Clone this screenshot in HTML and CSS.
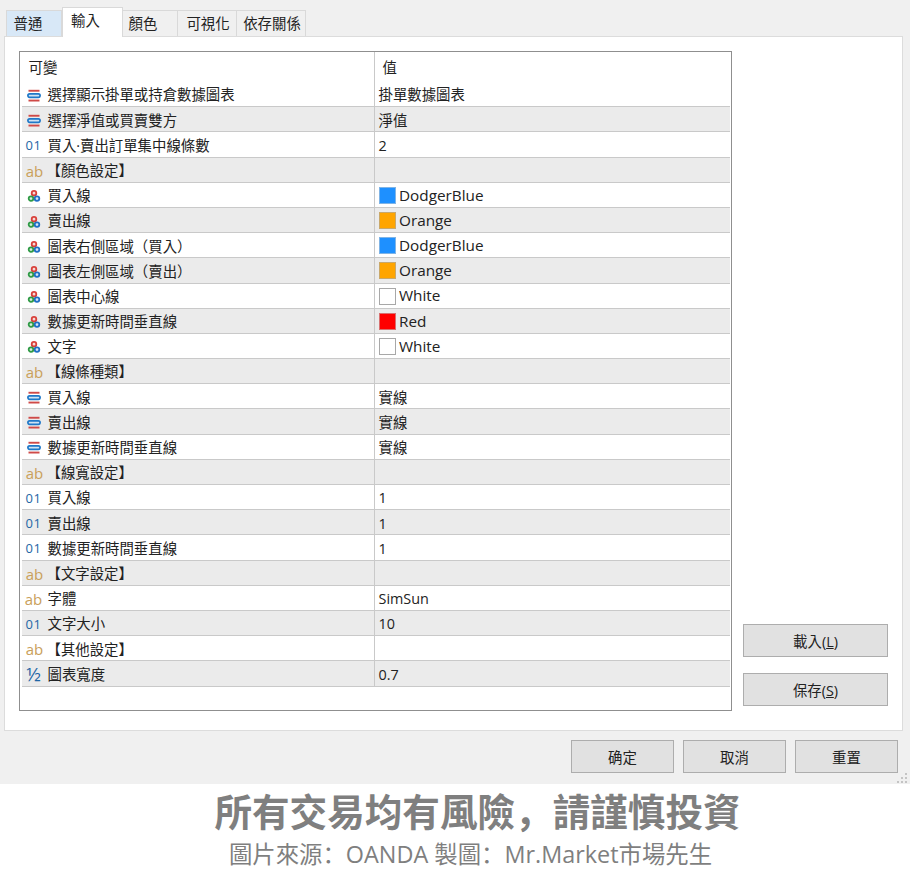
FILE: index.html
```html
<!DOCTYPE html>
<html lang="zh-Hant">
<head>
<meta charset="utf-8">
<title>輸入</title>
<link rel="stylesheet" href="styles.css">
</head>
<body>
<svg class="defs" width="0" height="0" aria-hidden="true">
  <symbol id="i-enum" viewBox="0 0 14 14">
    <rect x="1.5" y="0.8" width="11" height="1.9" fill="#cf4a48"/>
    <rect x="0.9" y="4.9" width="12.2" height="3.4" rx="1.7" fill="#cfe2f3" stroke="#1f78c8" stroke-width="1.7"/>
    <rect x="1.5" y="10.6" width="11" height="1.9" fill="#cf4a48"/>
  </symbol>
  <symbol id="i-color" viewBox="0 0 14 14">
    <circle cx="7" cy="4.2" r="2.3" fill="#f6d9d6" stroke="#d8403a" stroke-width="1.8"/>
    <circle cx="4" cy="9.6" r="2.3" fill="#d9efdb" stroke="#2f9a45" stroke-width="1.8"/>
    <circle cx="10" cy="9.6" r="2.3" fill="#d6e6f6" stroke="#1f6fc4" stroke-width="1.8"/>
  </symbol>
</svg>
<div class="dialog">
  <nav class="tabs">
    <div class="tab tab-hover">普通</div>
    <div class="tab tab-active">輸入</div>
    <div class="tab tab-color">顏色</div>
    <div class="tab tab-vis">可視化</div>
    <div class="tab tab-dep">依存關係</div>
  </nav>
  <main class="panel">
    <section class="table">
      <div class="row head"><div class="c1 head-c1">可變</div><div class="c2 head-c2">值</div></div>
      <div class="row"><div class="c1"><svg class="ico"><use href="#i-enum"/></svg>選擇顯示掛單或持倉數據圖表</div><div class="c2">掛單數據圖表</div></div>
      <div class="row alt"><div class="c1"><svg class="ico"><use href="#i-enum"/></svg>選擇淨值或買賣雙方</div><div class="c2">淨值</div></div>
      <div class="row"><div class="c1"><span class="ico num">01</span>買入·賣出訂單集中線條數</div><div class="c2">2</div></div>
      <div class="row alt"><div class="c1 sec"><span class="ico str">ab</span>【顏色設定】</div><div class="c2"></div></div>
      <div class="row"><div class="c1"><svg class="ico"><use href="#i-color"/></svg>買入線</div><div class="c2 named"><i class="sw blue"></i>DodgerBlue</div></div>
      <div class="row alt"><div class="c1"><svg class="ico"><use href="#i-color"/></svg>賣出線</div><div class="c2 named"><i class="sw orange"></i>Orange</div></div>
      <div class="row"><div class="c1"><svg class="ico"><use href="#i-color"/></svg>圖表右側區域（買入）</div><div class="c2 named"><i class="sw blue"></i>DodgerBlue</div></div>
      <div class="row alt"><div class="c1"><svg class="ico"><use href="#i-color"/></svg>圖表左側區域（賣出）</div><div class="c2 named"><i class="sw orange"></i>Orange</div></div>
      <div class="row"><div class="c1"><svg class="ico"><use href="#i-color"/></svg>圖表中心線</div><div class="c2 named"><i class="sw white"></i>White</div></div>
      <div class="row alt"><div class="c1"><svg class="ico"><use href="#i-color"/></svg>數據更新時間垂直線</div><div class="c2 named"><i class="sw red"></i>Red</div></div>
      <div class="row"><div class="c1"><svg class="ico"><use href="#i-color"/></svg>文字</div><div class="c2 named"><i class="sw white"></i>White</div></div>
      <div class="row alt"><div class="c1 sec"><span class="ico str">ab</span>【線條種類】</div><div class="c2"></div></div>
      <div class="row"><div class="c1"><svg class="ico"><use href="#i-enum"/></svg>買入線</div><div class="c2">實線</div></div>
      <div class="row alt"><div class="c1"><svg class="ico"><use href="#i-enum"/></svg>賣出線</div><div class="c2">實線</div></div>
      <div class="row"><div class="c1"><svg class="ico"><use href="#i-enum"/></svg>數據更新時間垂直線</div><div class="c2">實線</div></div>
      <div class="row alt"><div class="c1 sec"><span class="ico str">ab</span>【線寬設定】</div><div class="c2"></div></div>
      <div class="row"><div class="c1"><span class="ico num">01</span>買入線</div><div class="c2">1</div></div>
      <div class="row alt"><div class="c1"><span class="ico num">01</span>賣出線</div><div class="c2">1</div></div>
      <div class="row"><div class="c1"><span class="ico num">01</span>數據更新時間垂直線</div><div class="c2">1</div></div>
      <div class="row alt"><div class="c1 sec"><span class="ico str">ab</span>【文字設定】</div><div class="c2"></div></div>
      <div class="row"><div class="c1"><span class="ico str">ab</span>字體</div><div class="c2">SimSun</div></div>
      <div class="row alt"><div class="c1"><span class="ico num">01</span>文字大小</div><div class="c2">10</div></div>
      <div class="row"><div class="c1 sec"><span class="ico str">ab</span>【其他設定】</div><div class="c2"></div></div>
      <div class="row alt"><div class="c1"><span class="ico frac">½</span>圖表寬度</div><div class="c2">0.7</div></div>
    </section>
    <aside class="side">
      <button class="btn side-btn">載入(<u>L</u>)</button>
      <button class="btn side-btn">保存(<u>S</u>)</button>
    </aside>
  </main>
  <footer class="actions">
    <button class="btn act-btn">确定</button>
    <button class="btn act-btn">取消</button>
    <button class="btn act-btn">重置</button>
    <svg class="grip" width="12" height="12" viewBox="0 0 12 12" aria-hidden="true">
      <g fill="#c4c4c4"><rect x="8" y="0" width="2" height="2"/><rect x="4" y="4" width="2" height="2"/><rect x="8" y="4" width="2" height="2"/><rect x="0" y="8" width="2" height="2"/><rect x="4" y="8" width="2" height="2"/><rect x="8" y="8" width="2" height="2"/></g>
    </svg>
  </footer>
</div>
<div class="caption" lang="zh-Hans">
  <div class="cap-title">所有交易均有風險，請謹慎投資</div>
  <div class="cap-sub">圖片來源：OANDA 製圖：Mr.Market市場先生</div>
</div>
</body>
</html>
```
FILE: styles.css
```css
* { box-sizing: border-box; }
html, body { margin: 0; padding: 0; background: #fff; }
body {
  width: 910px;
  height: 883px;
  overflow: hidden;
  font-family: "Open Sans", "Noto Sans CJK TC", sans-serif;
  font-size: 14.4px;
  color: #222;
}
.defs { position: absolute; }
.dialog {
  height: 784px;
  background: #f0f0f0;
  padding: 10px 7px 0 4px;
}
.tabs {
  display: flex;
  height: 26px;
  padding-left: 2px;
  position: relative;
  z-index: 1;
}
.tab {
  height: 26px;
  border: 1px solid #d9d9d9;
  border-bottom: 0;
  border-left: 0;
  padding-bottom: 3px;
  display: flex;
  align-items: center;
  justify-content: center;
  background: #f0f0f0;
}
.tab-hover { width: 56px; background: #d8e8f7; border-left: 1px solid #d9d9d9; padding-right: 12px; }
.tab-active {
  width: 61px;
  height: 30px;
  margin-top: -3px;
  padding-bottom: 7px;
  padding-right: 14px;
  background: #fff;
  border-left: 1px solid #d9d9d9;
}
.tab-color { width: 55px; padding-right: 14px; }
.tab-vis { width: 59px; padding-left: 2px; }
.tab-dep { width: 69px; padding-left: 2px; }
.panel {
  height: 695px;
  background: #fff;
  border: 1px solid #dcdcdc;
  padding: 14px 14px 20px 14px;
  display: flex;
  gap: 11px;
}
.table {
  width: 714px;
  height: 660px;
  border: 1.5px solid #8f8f8f;
  background: #fff;
  padding: 0 1.5px;
}
.row {
  display: grid;
  grid-template-columns: 352px 1fr;
  height: 25.2px;
  border-bottom: 1.4px solid #c9c9c9;
}
.head { height: 30px; border-bottom: 0; }
.alt { background: #ebebeb; }
.c1, .c2 {
  display: flex;
  align-items: center;
  white-space: nowrap;
  line-height: 1;
  padding-top: 3px;
}
.c1 { padding-left: 5px; }
.c2 { border-left: 1px solid #c9c9c9; padding-left: 4px; }
.c2.named { font-size: 15.3px; padding-top: 1px; }
.head .c1, .head .c2 { padding-top: 2px; }
.head-c1 { padding-left: 7px; }
.head-c2 { padding-left: 8px; }
.sec { padding-left: 6px; }
.sec .ico { margin-right: 5px; }
.ico {
  width: 14px;
  height: 14px;
  margin-right: 7px;
  flex: none;
}
.num, .str, .frac {
  display: inline-flex;
  align-items: center;
  justify-content: center;
  font-family: "Open Sans", sans-serif;
}
.num { color: #1f66a5; font-size: 13px; font-weight: 500; letter-spacing: 0.6px; }
.str { color: #c9a05a; font-size: 15px; }
.frac { color: #1f66a5; font-size: 19px; font-weight: 400; }
.sw {
  width: 17px;
  height: 17px;
  margin-right: 3.5px;
  border: 1px solid #a8a8a8;
  display: block;
  flex: none;
}
.blue { background: #1e90ff; border-color: #7fb4e6; }
.orange { background: #ffa500; border-color: #c9a86a; }
.white { background: #fff; }
.red { background: #ff0000; border-color: #d87070; }
.side {
  display: flex;
  flex-direction: column;
  justify-content: flex-end;
  gap: 16px;
  padding-bottom: 4px;
}
.btn {
  font: inherit;
  color: #222;
  background: #e1e1e1;
  border: 1px solid #adadad;
  padding: 0;
  display: block;
}
.side-btn { width: 145px; height: 33px; }
.actions {
  position: relative;
  display: flex;
  justify-content: flex-end;
  gap: 9px;
  padding-top: 9px;
  padding-right: 5px;
}
.act-btn { width: 103px; height: 33px; }
.grip { position: absolute; right: -6px; top: 42px; }
.caption { text-align: center; color: #7f7f7f; }
.cap-title {
  font-size: 37.6px;
  font-weight: 700;
  line-height: 1;
  padding: 7px 0 0 45px;
  font-family: "Noto Sans CJK SC", sans-serif;
}
.cap-sub {
  font-size: 23.4px;
  line-height: 1;
  padding: 14px 0 0 31px;
  font-family: "Open Sans", "Noto Sans CJK SC", sans-serif;
}
```
